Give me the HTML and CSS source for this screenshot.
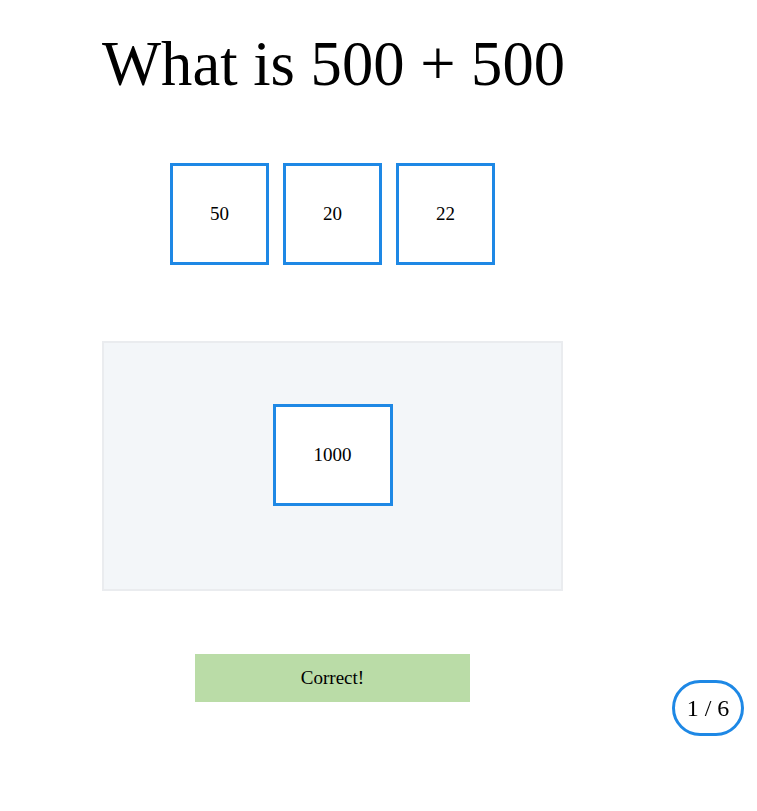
FILE: index.html
```html
<!DOCTYPE html>
<html>
<head>
<meta charset="utf-8">
<link rel="stylesheet" href="styles.css">
</head>
<body>
<main class="page">
  <h1 class="question">What is 500 + 500</h1>
  <div class="options">
    <div class="tile">50</div>
    <div class="tile">20</div>
    <div class="tile">22</div>
  </div>
  <div class="dropzone">
    <div class="tile tile-wide">1000</div>
  </div>
  <div class="result">Correct!</div>
</main>
<div class="counter">1 / 6</div>
</body>
</html>
```

FILE: styles.css
```css
html, body {
  margin: 0;
  padding: 0;
  background: #ffffff;
}
body {
  font-family: "Liberation Serif", "Times New Roman", serif;
  color: #000;
}
.page {
  width: 461px;
  margin-left: 102px;
  padding-top: 30px;
  display: flex;
  flex-direction: column;
  align-items: center;
}
.question {
  align-self: flex-start;
  margin: 0;
  font-size: 62.6px;
  font-weight: normal;
  line-height: 69px;
  white-space: nowrap;
}
.options {
  margin-top: 64px;
  display: flex;
  gap: 14px;
}
.tile {
  box-sizing: border-box;
  width: 99px;
  height: 102px;
  border: 3px solid #1e88e5;
  background: #fff;
  display: flex;
  align-items: center;
  justify-content: center;
  font-size: 19px;
}
.tile-wide {
  width: 120px;
}
.dropzone {
  box-sizing: border-box;
  margin-top: 76px;
  width: 461px;
  height: 250px;
  background: #f3f6f9;
  border: 2px solid #eaecef;
  display: flex;
  justify-content: center;
  align-items: flex-start;
  padding-top: 61px;
}
.result {
  margin-top: 63px;
  width: 275px;
  height: 48px;
  background: #badca7;
  display: flex;
  align-items: center;
  justify-content: center;
  font-size: 19px;
}
.counter {
  position: fixed;
  right: 13px;
  bottom: 75px;
  box-sizing: border-box;
  width: 72px;
  height: 56px;
  border: 3px solid #1e88e5;
  border-radius: 28px;
  display: flex;
  align-items: center;
  justify-content: center;
  font-size: 24px;
}
```
